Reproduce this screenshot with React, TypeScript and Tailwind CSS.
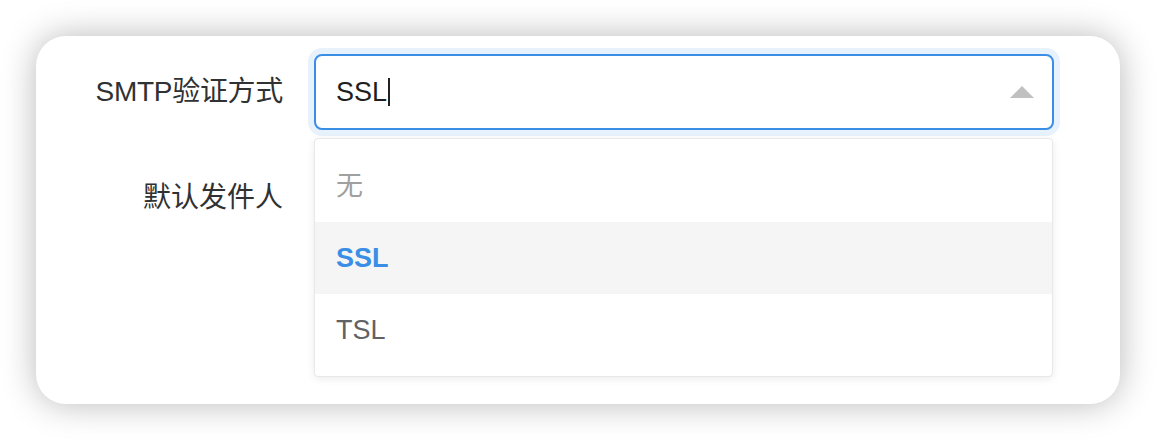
export default function App() {
  const options = [
    { label: '无', state: 'placeholder' },
    { label: 'SSL', state: 'selected' },
    { label: 'TSL', state: 'normal' },
  ]

  return (
    <div className="w-[1156px] h-[440px] bg-white pt-[36px] pl-[36px] font-['Liberation_Sans','Noto_Sans_CJK_SC',sans-serif]">
      <div className="relative w-[1084px] h-[368px] bg-white rounded-[30px] shadow-[0_0_34px_rgba(0,0,0,0.28)] pt-[18px]">
        {/* row 1 */}
        <div className="flex items-center">
          <label className="w-[247px] text-right text-[28px] tracking-[-0.3px] text-[#303133] leading-none">
            SMTP验证方式
          </label>
          <div className="relative ml-[31px]">
            <div className="relative w-[740px] h-[76px] rounded-[8px] border-2 border-[#3a8ee6] ring-[6px] ring-[#e8f2fd] bg-white flex items-center pl-[20px]">
              <span className="text-[27px] text-[#1f1f1f] leading-none">SSL</span>
              <span className="w-[2px] h-[28px] bg-[#222] ml-[1px]" />
              <svg className="absolute right-[18px] top-[30px]" width="24" height="12" viewBox="0 0 24 12">
                <path d="M12 0 L24 12 L0 12 Z" fill="#c0c0c0" />
              </svg>
            </div>

            {/* dropdown */}
            <div className="absolute left-0 top-[84px] w-[739px] bg-white border border-[#e8e8e8] rounded-[4px] shadow-[0_2px_8px_rgba(0,0,0,0.08)] pt-[11px] pb-[10px] z-10">
              {options.map((o) => (
                <div
                  key={o.label}
                  className={`h-[72px] flex items-center pl-[21px] text-[27px] ${
                    o.state === 'selected'
                      ? 'bg-[#f5f5f5] text-[#3a8ee6] font-bold'
                      : o.state === 'placeholder'
                        ? 'text-[#a0a0a0]'
                        : 'text-[#606266]'
                  }`}
                >
                  {o.label}
                </div>
              ))}
            </div>
          </div>
        </div>

        {/* row 2 */}
        <div className="flex items-center mt-[48px] h-[40px]">
          <label className="w-[247px] text-right text-[28px] text-[#303133] leading-none">
            默认发件人
          </label>
        </div>
      </div>
    </div>
  )
}
